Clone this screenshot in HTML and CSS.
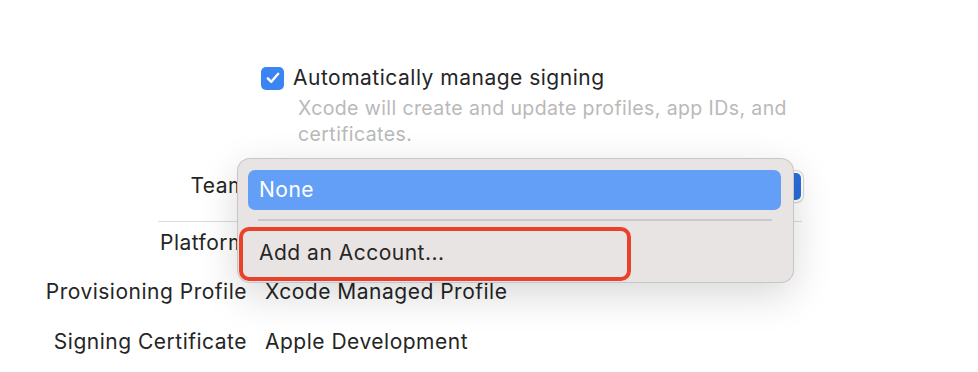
FILE: index.html
```html
<!DOCTYPE html>
<html>
<head>
<meta charset="utf-8">
<title>Signing</title>
<link rel="stylesheet" href="styles.css">
</head>
<body>
	<div class="signing">
		<div class="form">
			<div class="label"></div>
			<div class="value check-row">
				<span class="checkbox">
					<svg width="14" height="12" viewBox="0 0 14 12"><path d="M1.8 6.4 L5.3 9.8 L12.2 1.8" fill="none" stroke="#fff" stroke-width="2.4" stroke-linecap="round" stroke-linejoin="round"/></svg>
				</span>
				<span>Automatically manage signing</span>
			</div>
			<div class="label"></div>
			<div class="value desc">Xcode will create and update profiles, app IDs, and certificates.</div>

			<div class="label team">Team</div>
			<div class="value team">
				<div class="popup-button"><span class="arrows"></span></div>
			</div>

			<div class="divider"></div>

			<div class="label platform">Platform</div>
			<div class="value platform"></div>

			<div class="label">Provisioning Profile</div>
			<div class="value">Xcode Managed Profile</div>

			<div class="label">Signing Certificate</div>
			<div class="value">Apple Development</div>
		</div>

		<div class="menu">
			<div class="menu-item selected">None</div>
			<div class="menu-sep"></div>
			<div class="menu-item">Add an Account...</div>
		</div>
		<div class="highlight-box"></div>
	</div>
</body>
</html>
```

FILE: styles.css
```css
*
{
	margin:0;
	padding:0;
	box-sizing:border-box;
}
body
{
	background-color:#ffffff;
	font-family:"Inter","Liberation Sans",sans-serif;
	font-size:21px;
	letter-spacing:0.5px;
	color:#252525;
}
div.signing
{
	position:relative;
	width:978px;
	height:372px;
	padding-top:66px;
}
div.form
{
	display:grid;
	grid-template-columns:239px 530px;
	column-gap:18px;
	padding-left:8px;
	align-items:center;
}
div.label
{
	text-align:right;
	white-space:nowrap;
	height:50px;
	line-height:50px;
}
div.value
{
	white-space:nowrap;
	height:50px;
	line-height:50px;
}
div.check-row
{
	display:flex;
	align-items:center;
	gap:9px;
	margin-left:-4px;
	height:24px;
	line-height:24px;
}
div.form div.label:first-child
{
	height:24px;
}
span.checkbox
{
	display:flex;
	align-items:center;
	justify-content:center;
	width:23px;
	height:23px;
	border-radius:5px;
	background-color:#3b84f4;
}
div.desc
{
	white-space:normal;
	height:auto;
	line-height:26px;
	font-size:19.5px;
	letter-spacing:0.4px;
	color:#b9b9b9;
	padding-left:33px;
	padding-top:5px;
	padding-bottom:14px;
	width:560px;
}
div.popup-button
{
	height:31px;
	width:538px;
	border-radius:7px;
	background-color:#ffffff;
	box-shadow:0 0 0 1px #d8d8d8, 0 1px 2px rgba(0,0,0,0.15);
	position:relative;
	margin-top:10px;
}
span.arrows
{
	position:absolute;
	right:2px;
	top:2px;
	width:22px;
	height:27px;
	border-radius:5px;
	background-color:#2b6ddb;
}
div.divider
{
	grid-column:1 / 3;
	height:1px;
	background-color:#dcdcdc;
	margin-left:150px;
	margin-right:-7px;
	margin-top:10px;
}
div.platform
{
	height:45px;
	line-height:42px;
}

/* popup menu over the form */
div.menu
{
	position:absolute;
	left:238px;
	top:159px;
	width:555px;
	height:123px;
	padding:11px 12px 0 10px;
	background-color:#e9e4e4;
	border-radius:12px;
	box-shadow:0 0 0 1px #c9c5c5, 0 12px 40px rgba(0,0,0,0.16);
}
div.menu-item
{
	height:40px;
	line-height:40px;
	padding-left:11px;
	border-radius:7px;
	color:#262626;
}
div.menu-item.selected
{
	background-color:#639ff6;
	color:#ffffff;
}
div.menu-sep
{
	height:2px;
	background-color:#cdc8c8;
	margin:9px 9px 12px 10px;
}
div.highlight-box
{
	position:absolute;
	left:239px;
	top:227px;
	width:392px;
	height:54px;
	border:4px solid #e9412a;
	border-radius:10px;
}
```
